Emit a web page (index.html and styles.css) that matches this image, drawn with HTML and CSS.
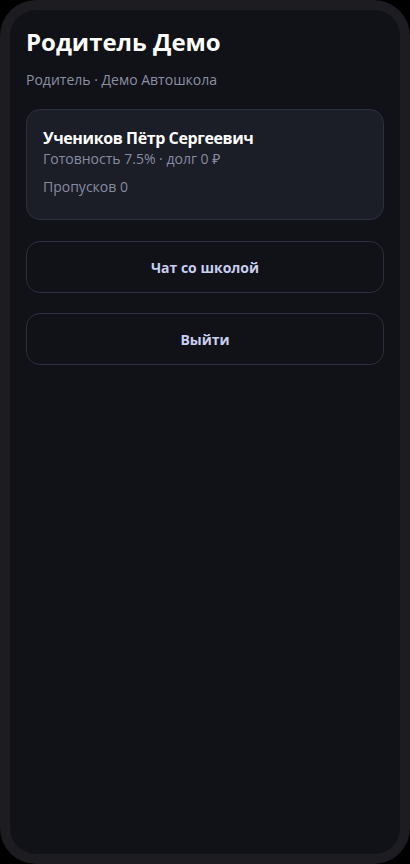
FILE: index.html
```html
<!DOCTYPE html>
<html lang="ru">
<head>
<meta charset="utf-8">
<link rel="stylesheet" href="styles.css">
</head>
<body>
<div class="phone">
  <div class="screen">
    <h1 class="title">Родитель Демо</h1>
    <p class="subtitle">Родитель · Демо Автошкола</p>
    <div class="card">
      <div class="card-name">Учеников Пётр Сергеевич</div>
      <div class="card-line">Готовность 7.5% · долг 0 ₽</div>
      <div class="card-line card-gap">Пропусков 0</div>
    </div>
    <div class="actions">
      <button class="btn">Чат со школой</button>
      <button class="btn">Выйти</button>
    </div>
  </div>
</div>
</body>
</html>
```
FILE: styles.css
```css
html, body {
  margin: 0;
  padding: 0;
  background: #000;
}
body {
  font-family: "Open Sans", "Noto Sans", sans-serif;
  width: 410px;
  height: 864px;
}
.phone {
  box-sizing: border-box;
  width: 410px;
  height: 864px;
  padding: 10px;
  background: #1c1c21;
  border-radius: 36px;
}
.screen {
  box-sizing: border-box;
  height: 100%;
  background: #111217;
  border-radius: 26px;
  padding: 16px 16px;
  display: flex;
  flex-direction: column;
}
.title {
  margin: 0;
  font-size: 24px;
  line-height: 32px;
  font-weight: 700;
  color: #ffffff;
}
.subtitle {
  margin: 12px 0 0;
  font-size: 14px;
  line-height: 20px;
  color: #8b90a3;
}
.card {
  margin-top: 19px;
  background: #1b1d27;
  border: 1px solid #2c2f3e;
  border-radius: 14px;
  padding: 17px 16px 22px;
}
.card-name {
  font-size: 16px;
  line-height: 22px;
  font-weight: 700;
  color: #ffffff;
  letter-spacing: -0.4px;
}
.card-line {
  font-size: 14px;
  line-height: 20px;
  color: #878ca0;
}
.card-gap {
  margin-top: 8px;
}
.actions {
  margin-top: 21px;
  display: flex;
  flex-direction: column;
  gap: 20px;
}
.btn {
  height: 52px;
  background: transparent;
  border: 1px solid #2c2f3e;
  border-radius: 14px;
  font-family: inherit;
  font-size: 14px;
  font-weight: 700;
  color: #c8cff0;
  cursor: pointer;
}
```
